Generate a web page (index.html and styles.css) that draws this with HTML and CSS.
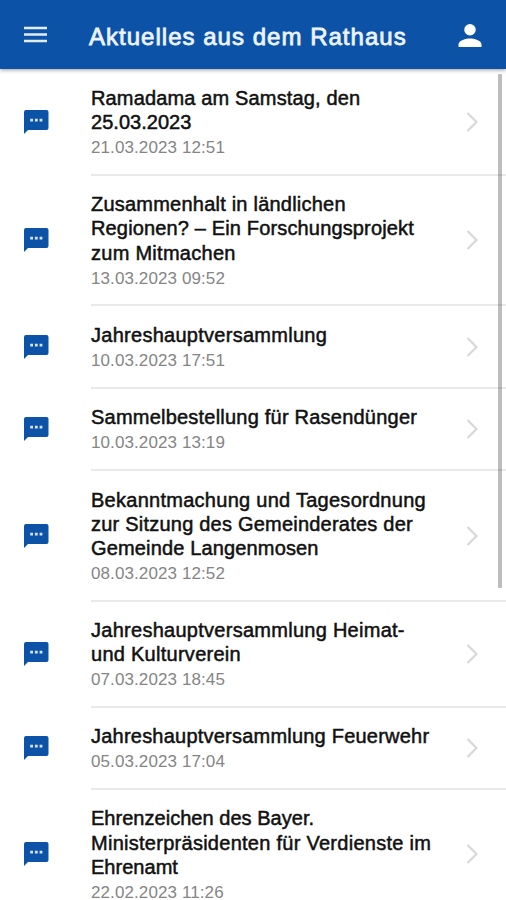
FILE: index.html
```html
<!DOCTYPE html>
<html lang="de">
<head>
<meta charset="utf-8">
<title>Aktuelles aus dem Rathaus</title>
<link rel="stylesheet" href="styles.css">
</head>
<body>
<svg class="defs" aria-hidden="true">
  <symbol id="chat" viewBox="0 0 25 24"><path d="M2 0H22.500Q24.500 0 24.500 2V18Q24.500 20 22.500 20H4L0 24V2Q0 0 2 0Z" fill="#0c53a8"/><path d="M6.200 8.800h2.800v2.600h-2.800zM10.900 8.800h2.800v2.600h-2.800zM15.600 8.800h2.800v2.600h-2.800z" fill="#d5e3f5"/></symbol>
  <symbol id="chevron" viewBox="0 0 12 20"><path d="M1.500 1L10.500 10L1.500 19" fill="none" stroke="#d8d8d8" stroke-width="2.200"/></symbol>
</svg>
<header class="bar">
  <svg class="menu" viewBox="0 0 23 17"><path d="M0 2H23M0 8.500H23M0 15H23" stroke="#e3edfa" stroke-width="2.700"/></svg>
  <h1>Aktuelles aus dem Rathaus</h1>
  <svg class="user" viewBox="4 4 16 16"><path fill="#fff" d="M12 12a4 4 0 1 0 0-8 4 4 0 0 0 0 8zm0 2c-2.670 0-8 1.340-8 4v2h16v-2c0-2.660-5.330-4-8-4z"/></svg>
</header>
<main class="list">
  <article class="row two"><svg class="chat"><use href="#chat"/></svg><div class="body"><h2><span class="tight">Ramadama am Samstag, den</span><span class="flat">25.03.2023</span></h2><time>21.03.2023 12:51</time></div><svg class="chevron"><use href="#chevron"/></svg></article>
  <article class="row three"><svg class="chat"><use href="#chat"/></svg><div class="body"><h2><span>Zusammenhalt in ländlichen</span><span class="tight">Regionen? – Ein Forschungsprojekt</span><span class="wide">zum Mitmachen</span></h2><time>13.03.2023 09:52</time></div><svg class="chevron"><use href="#chevron"/></svg></article>
  <article class="row"><svg class="chat"><use href="#chat"/></svg><div class="body"><h2><span class="wide">Jahreshauptversammlung</span></h2><time>10.03.2023 17:51</time></div><svg class="chevron"><use href="#chevron"/></svg></article>
  <article class="row"><svg class="chat"><use href="#chat"/></svg><div class="body"><h2><span>Sammelbestellung für Rasendünger</span></h2><time>10.03.2023 13:19</time></div><svg class="chevron"><use href="#chevron"/></svg></article>
  <article class="row three"><svg class="chat"><use href="#chat"/></svg><div class="body"><h2><span class="wide">Bekanntmachung und Tagesordnung</span><span>zur Sitzung des Gemeinderates der</span><span class="tight">Gemeinde Langenmosen</span></h2><time>08.03.2023 12:52</time></div><svg class="chevron"><use href="#chevron"/></svg></article>
  <article class="row two"><svg class="chat"><use href="#chat"/></svg><div class="body"><h2><span class="wide">Jahreshauptversammlung Heimat-</span><span class="wide">und Kulturverein</span></h2><time>07.03.2023 18:45</time></div><svg class="chevron"><use href="#chevron"/></svg></article>
  <article class="row"><svg class="chat"><use href="#chat"/></svg><div class="body"><h2><span>Jahreshauptversammlung Feuerwehr</span></h2><time>05.03.2023 17:04</time></div><svg class="chevron"><use href="#chevron"/></svg></article>
  <article class="row three"><svg class="chat"><use href="#chat"/></svg><div class="body"><h2><span class="flat">Ehrenzeichen des Bayer.</span><span class="wide">Ministerpräsidenten für Verdienste im</span><span class="flat">Ehrenamt</span></h2><time>22.02.2023 11:26</time></div><svg class="chevron"><use href="#chevron"/></svg></article>
</main>
<div class="scrollbar"></div>
</body>
</html>
```
FILE: styles.css
```css
* { box-sizing: border-box; }
body { margin: 0; height: 900px; overflow: hidden; background: #fff; font-family: "Liberation Sans", Arial, sans-serif; }
.defs { display: none; }
.bar { display: flex; align-items: center; height: 69px; padding: 0 24px; background: #0c53a8; box-shadow: 0 1px 4px rgba(0, 0, 0, .4); }
.menu { width: 23px; height: 17px; margin-right: 42px; flex: none; }
.bar h1 { flex: 1; margin: 5px 0 0; color: #edf4ff; font-size: 24px; font-weight: 400; -webkit-text-stroke: .8px #edf4ff; letter-spacing: 1.020px; white-space: nowrap; }
.user { width: 24px; height: 23px; margin-top: 1px; flex: none; }
.list { display: flex; flex-direction: column; padding-top: 1px; }
.row { display: flex; align-items: center; height: 82.500px; flex: none; padding-left: 24px; }
.row.two { height: 106px; }
.row.three { height: 130.400px; }
.chat { width: 25px; height: 24px; margin: 0 42px 2px 0; flex: none; }
.body { flex: 1; height: 100%; padding-top: 16.200px; border-bottom: 2px solid #e9e9e9; }
.body h2 { margin: 0; color: #111; font-size: 20px; font-weight: 400; line-height: 24px; letter-spacing: .220px; -webkit-text-stroke: .5px #111; }
.three h2 { line-height: 24.300px; }
.body h2 span { display: block; white-space: nowrap; }
.body h2 .tight { letter-spacing: .150px; }
.body h2 .flat { letter-spacing: .030px; }
.body h2 .wide { letter-spacing: .270px; }
time { display: block; color: #858585; font-size: 17px; line-height: 28px; letter-spacing: .1px; }
.three time { line-height: 27px; }
.chevron { width: 12px; height: 20px; flex: none; margin: 0 28px 2px -40px; }
.scrollbar { position: absolute; right: 4px; top: 74px; width: 4px; height: 514px; border-radius: 1px; background: rgba(0, 0, 0, .26); }
```
